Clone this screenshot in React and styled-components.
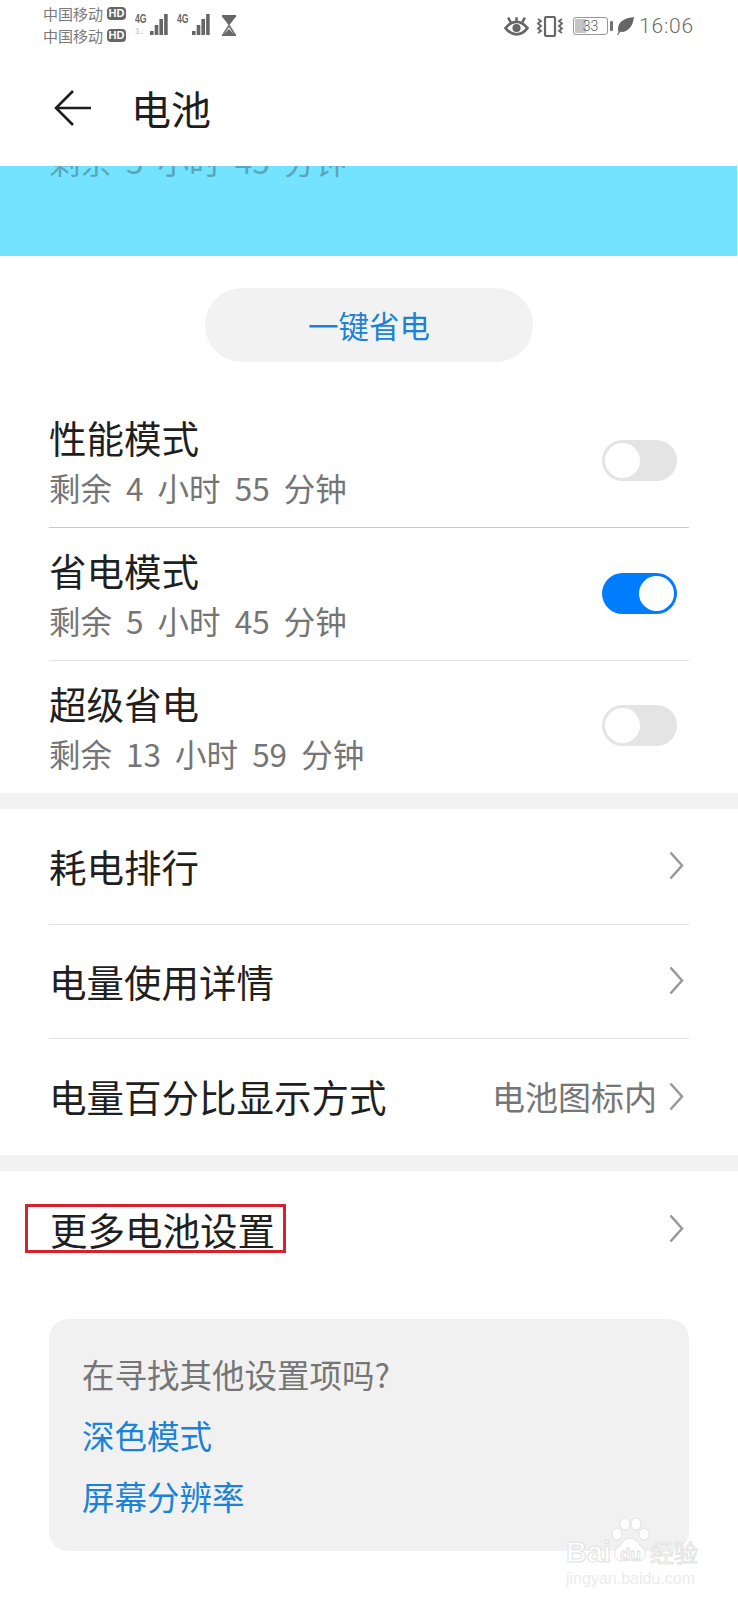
import React from "react";
import styled, { createGlobalStyle } from "styled-components";

const GlobalStyle = createGlobalStyle`
  html, body {
    margin: 0;
    padding: 0;
    background: #ffffff;
  }
  * {
    box-sizing: border-box;
  }
  body {
    font-family: "Noto Sans CJK SC", "Noto Sans", sans-serif;
  }
`;

const Page = styled.div`
  position: relative;
  width: 738px;
  height: 1600px;
  overflow: hidden;
  background: #ffffff;
`;

const StatusBar = styled.div`
  display: flex;
  justify-content: space-between;
  align-items: center;
  height: 50px;
  padding: 0 44px 0 43px;
  color: #707070;
`;

const StatusGroup = styled.div`
  display: flex;
  align-items: center;
  margin-top: ${(p) => p.$top || 0}px;
`;

const CarrierColumn = styled.div`
  display: flex;
  flex-direction: column;
  gap: 5px;
  margin: -2px 9px 0 0;
`;

const CarrierLine = styled.div`
  display: flex;
  align-items: center;
  gap: 4px;
  height: 17px;
  font-size: 15px;
  line-height: 17px;
  color: #7a7a7a;
`;

const HdBadge = styled.span`
  display: inline-flex;
  align-items: center;
  justify-content: center;
  width: 19px;
  height: 13px;
  border-radius: 4px;
  background: #666666;
  color: #ffffff;
  font-family: "Liberation Sans", sans-serif;
  font-size: 11px;
  font-weight: 700;
  line-height: 13px;
`;

const Signal = styled.div`
  position: relative;
  width: ${(p) => p.$width}px;
  height: 22px;
  margin-right: ${(p) => p.$gap}px;
`;

const NetworkLabel = styled.span`
  position: absolute;
  left: 0;
  top: 0;
  font-family: "Liberation Sans", sans-serif;
  font-size: 12px;
  font-weight: 700;
  line-height: 11px;
  color: #666666;
  transform: scaleX(0.72);
  transform-origin: left center;
`;

const SpeedLabel = styled.span`
  position: absolute;
  left: 0;
  bottom: 0;
  font-family: "Liberation Sans", sans-serif;
  font-size: 9px;
  font-weight: 700;
  line-height: 9px;
  color: #cccccc;
`;

const TimeLabel = styled.span`
  margin-left: 5px;
  font-family: Roboto, "Liberation Sans", sans-serif;
  font-size: 21px;
  font-weight: 300;
  letter-spacing: 0.8px;
  color: #6c6c6c;
`;

const Battery = styled.div`
  display: flex;
  align-items: center;
  justify-content: center;
  position: relative;
  width: 35px;
  height: 18px;
  margin: 0 2px 0 9px;
  border: 1px solid #999999;
  border-radius: 3px;
  overflow: hidden;
  font-family: Roboto, "Liberation Sans", sans-serif;
  font-size: 14px;
  font-weight: 300;
  color: #555555;
`;

const BatteryFill = styled.div`
  position: absolute;
  left: 1px;
  top: 1px;
  bottom: 1px;
  width: 33%;
  background: #c4c4c4;
`;

const BatteryText = styled.span`
  position: relative;
`;

const BatteryCap = styled.div`
  width: 3px;
  height: 10px;
  margin-right: 4px;
  border-radius: 1px;
  background: #707070;
`;

const Header = styled.div`
  display: flex;
  align-items: center;
  height: 116px;
  padding-left: 54px;
`;

const BackIcon = styled.svg`
  width: 38px;
  height: 38px;
  margin-right: 39px;
`;

const HeaderTitle = styled.h1`
  margin: 0;
  font-size: 40px;
  font-weight: 400;
  line-height: 50px;
  color: #1e1e1e;
`;

const Hero = styled.div`
  height: 90px;
  margin-right: 1px;
  padding-left: 49px;
  overflow: hidden;
  background: #74e3ff;
`;

const HeroGhost = styled.div`
  margin-top: -26px;
  font-size: 31.500px;
  line-height: 40px;
  word-spacing: 7px;
  color: #5aa5bb;
`;

const ActionWrap = styled.div`
  display: flex;
  justify-content: center;
  padding: 32px 0 33px;
`;

const ActionButton = styled.div`
  display: flex;
  align-items: center;
  justify-content: center;
  width: 328px;
  height: 74px;
  border-radius: 37px;
  background: #f2f2f2;
  color: #1a82d8;
  font-size: 30.500px;
`;

const List = styled.div`
  padding: 0 49px;
`;

const Band = styled.div`
  height: 16px;
  background: #f2f2f2;
`;

const ModeRow = styled.div`
  display: flex;
  align-items: center;
  justify-content: space-between;
  height: ${(p) => p.$height}px;
  padding: 0 12px 2px 0;
  border-bottom: 1px solid ${(p) => p.$line};
`;

const ModeText = styled.div`
  display: flex;
  flex-direction: column;
  gap: 6px;
`;

const Title = styled.div`
  font-size: 37.500px;
  line-height: 48px;
  color: #1f1f1f;
`;

const Sub = styled.div`
  font-size: 31.500px;
  line-height: 40px;
  word-spacing: 7px;
  color: #757575;
`;

const Toggle = styled.div`
  display: flex;
  justify-content: ${(p) => (p.$on ? "flex-end" : "flex-start")};
  width: 75px;
  height: 41px;
  padding: 3px;
  border-radius: 21px;
  background: ${(p) => (p.$on ? "#007dff" : "#e4e4e4")};
`;

const Knob = styled.div`
  width: 35px;
  height: 35px;
  border-radius: 50%;
  background: #ffffff;
`;

const NavRow = styled.div`
  display: flex;
  align-items: center;
  justify-content: space-between;
  height: ${(p) => p.$height}px;
  padding: 0 5px 2px 0;
  border-bottom: ${(p) => (p.$line ? "1px solid #e2e2e2" : "none")};
`;

const NavRight = styled.div`
  display: flex;
  align-items: center;
  gap: 12px;
`;

const NavValue = styled.span`
  font-size: 33px;
  color: #757575;
`;

const Chevron = styled.svg`
  width: 15px;
  height: 29px;
`;

const Highlight = styled.span`
  display: inline-block;
  height: 49px;
  margin-left: -24px;
  padding: 0 8px 0 22px;
  border: 3px solid #d3232e;
  line-height: 43px;
`;

const Card = styled.div`
  display: flex;
  flex-direction: column;
  height: 232px;
  margin: 32px 49px 0;
  padding: 24px 33px 0;
  border-radius: 20px;
  background: #f1f1f1;
`;

const CardLine = styled.div`
  height: 61px;
  font-size: 32.500px;
  line-height: 61px;
  color: ${(p) => p.$color};
`;

const Watermark = styled.div`
  position: absolute;
  left: 566px;
  top: 1518px;
  width: 134px;
  height: 70px;
`;

const WatermarkWord = styled.span`
  position: absolute;
  left: ${(p) => p.$left}px;
  top: ${(p) => p.$top}px;
  font-family: "Liberation Sans", sans-serif;
  font-size: ${(p) => p.$size}px;
  font-weight: 700;
  line-height: 1;
  white-space: nowrap;
  color: rgba(255, 255, 255, 0.9);
  -webkit-text-stroke: 1px #e2e2e2;
`;

const WatermarkCjk = styled(WatermarkWord)`
  font-family: "Noto Sans CJK SC", sans-serif;
  font-weight: 400;
`;

const WatermarkUrl = styled(WatermarkWord)`
  font-weight: 400;
  color: #ececec;
  -webkit-text-stroke: 0;
`;

const WatermarkPaw = styled.svg`
  position: absolute;
  left: 44px;
  top: 0;
  width: 40px;
  height: 48px;
`;

const modes = [
  { title: "性能模式", sub: "剩余 4 小时 55 分钟", on: false, line: "#c9c9c9", height: 133 },
  { title: "省电模式", sub: "剩余 5 小时 45 分钟", on: true, line: "#e4e4e4", height: 133 },
  { title: "超级省电", sub: "剩余 13 小时 59 分钟", on: false, line: "transparent", height: 132 },
];

function Bars() {
  const bars = [
    [0, 17, 4],
    [4.700, 11, 10],
    [9.400, 5, 16],
    [14.100, 0, 21],
  ];
  return (
    <svg width="18" height="22" viewBox="0 0 18 22" style={{ position: "absolute", right: 0, top: 0 }}>
      {bars.map(([x, y, h]) => (
        <rect key={x} x={x} y={y} width="3.600" height={h} fill="#666666" />
      ))}
    </svg>
  );
}

function Hourglass() {
  return (
    <svg width="16" height="21" viewBox="0 0 16 21">
      <path d="M1 1h14M1 20h14" stroke="#666" strokeWidth="2" />
      <path d="M1 1.500h14L8 10.500z" fill="#666" />
      <path d="M8 10.500l-5.500 8.500h11z" fill="none" stroke="#777" strokeWidth="1.800" />
      <path d="M8 14l-5 5.500h10z" fill="#666" />
    </svg>
  );
}

function EyeIcon() {
  return (
    <svg width="25" height="19" viewBox="0 0 24 18" style={{ marginRight: 7 }}>
      <path d="M1.500 10.500C5 6 8.500 4.500 12 4.500s7 1.500 10.500 6c-3.500 4.500-7 6-10.500 6s-7-1.500-10.500-6z" fill="none" stroke="#666" strokeWidth="2.600" />
      <circle cx="12" cy="10.500" r="3.900" fill="#666" />
      <path d="M4 .5l2.500 4.500M12 0v4.500M20 .5l-2.500 4.500" stroke="#666" strokeWidth="2.400" />
    </svg>
  );
}

function VibrateIcon() {
  return (
    <svg width="28" height="21" viewBox="0 0 28 21">
      <rect x="9" y="1" width="10" height="19" rx="1.500" fill="none" stroke="#666" strokeWidth="2.200" />
      <path d="M2 3l3 2-3 2.500 3 2.500-3 2.500 3 2.500-3 2M26 3l-3 2 3 2.500-3 2.500 3 2.500-3 2.500 3 2" fill="none" stroke="#666" strokeWidth="1.800" />
    </svg>
  );
}

function LeafIcon() {
  return (
    <svg width="17" height="18" viewBox="0 0 16 17">
      <path d="M16 0C9 1 2 3 1 10c-.3 2 0 3 .5 4L0 17l1 0 2-3c6 1 12-4 13-14z" fill="#666" />
    </svg>
  );
}

function ChevronIcon() {
  return (
    <Chevron viewBox="0 0 15 29">
      <path d="M1.500 1.500L13 14.500 1.500 27.500" fill="none" stroke="#9a9a9a" strokeWidth="2.600" />
    </Chevron>
  );
}

function App() {
  return (
    <Page>
      <GlobalStyle />
      <StatusBar>
        <StatusGroup>
          <CarrierColumn>
            <CarrierLine>中国移动<HdBadge>HD</HdBadge></CarrierLine>
            <CarrierLine>中国移动<HdBadge>HD</HdBadge></CarrierLine>
          </CarrierColumn>
          <Signal $width={33} $gap={9}>
            <NetworkLabel>4G</NetworkLabel>
            <SpeedLabel>1↓</SpeedLabel>
            <Bars />
          </Signal>
          <Signal $width={33} $gap={11}>
            <NetworkLabel>4G</NetworkLabel>
            <Bars />
          </Signal>
          <Hourglass />
        </StatusGroup>
        <StatusGroup $top={2}>
          <EyeIcon />
          <VibrateIcon />
          <Battery>
            <BatteryFill />
            <BatteryText>33</BatteryText>
          </Battery>
          <BatteryCap />
          <LeafIcon />
          <TimeLabel>16:06</TimeLabel>
        </StatusGroup>
      </StatusBar>

      <Header>
        <BackIcon viewBox="0 0 38 38">
          <path d="M37 19H2M19 2L2 19l17 17" fill="none" stroke="#1e1e1e" strokeWidth="2.600" />
        </BackIcon>
        <HeaderTitle>电池</HeaderTitle>
      </Header>

      <Hero>
        <HeroGhost>剩余 5 小时 45 分钟</HeroGhost>
      </Hero>

      <ActionWrap>
        <ActionButton>一键省电</ActionButton>
      </ActionWrap>

      <List>
        {modes.map((m) => (
          <ModeRow key={m.title} $line={m.line} $height={m.height}>
            <ModeText>
              <Title>{m.title}</Title>
              <Sub>{m.sub}</Sub>
            </ModeText>
            <Toggle $on={m.on}>
              <Knob />
            </Toggle>
          </ModeRow>
        ))}
      </List>

      <Band />

      <List>
        <NavRow $height={116} $line>
          <Title>耗电排行</Title>
          <ChevronIcon />
        </NavRow>
        <NavRow $height={114} $line>
          <Title>电量使用详情</Title>
          <ChevronIcon />
        </NavRow>
        <NavRow $height={116}>
          <Title>电量百分比显示方式</Title>
          <NavRight>
            <NavValue>电池图标内</NavValue>
            <ChevronIcon />
          </NavRight>
        </NavRow>
      </List>

      <Band />

      <List>
        <NavRow $height={116}>
          <Title>
            <Highlight>更多电池设置</Highlight>
          </Title>
          <ChevronIcon />
        </NavRow>
      </List>

      <Card>
        <CardLine $color="#757575">在寻找其他设置项吗?</CardLine>
        <CardLine $color="#1a82d8">深色模式</CardLine>
        <CardLine $color="#1a82d8">屏幕分辨率</CardLine>
      </Card>

      <Watermark>
        <WatermarkPaw viewBox="0 0 40 48">
          <g fill="rgba(255,255,255,0.9)" stroke="#e2e2e2" strokeWidth="1">
            <ellipse cx="7" cy="16" rx="5" ry="6" />
            <ellipse cx="15" cy="6" rx="5" ry="6" />
            <ellipse cx="26" cy="6" rx="5" ry="6" />
            <ellipse cx="34" cy="16" rx="5" ry="6" />
            <path d="M20 20c6 0 8 6 13 10 5 5 2 14-6 13-3 0-5-1-7-1s-4 1-7 1c-8 1-11-8-6-13 5-4 7-10 13-10z" />
          </g>
        </WatermarkPaw>
        <WatermarkWord $left={0} $top={20} $size={29}>Bai</WatermarkWord>
        <WatermarkWord $left={54} $top={28} $size={17}>du</WatermarkWord>
        <WatermarkCjk $left={84} $top={22} $size={24}>经验</WatermarkCjk>
        <WatermarkUrl $left={0} $top={53} $size={16}>jingyan.baidu.com</WatermarkUrl>
      </Watermark>
    </Page>
  );
}

export default App;
